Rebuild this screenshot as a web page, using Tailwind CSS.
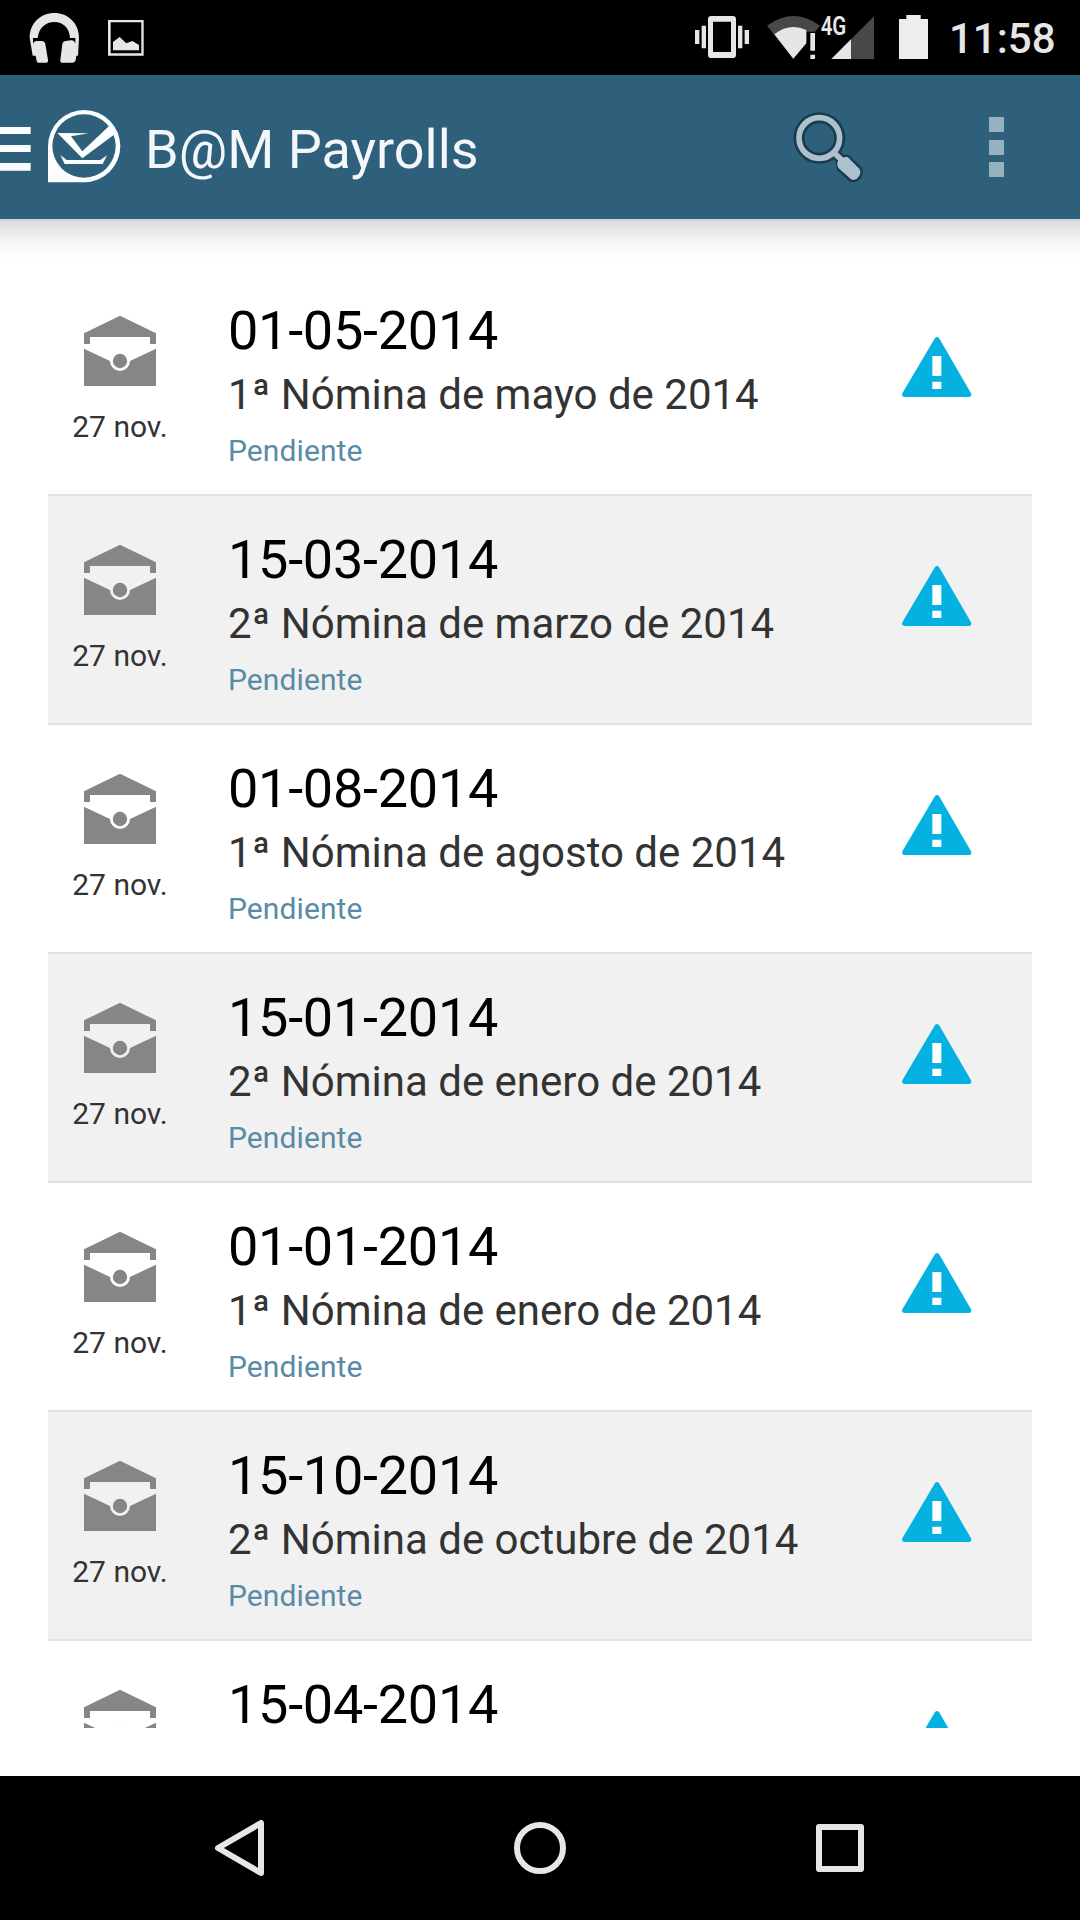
<!DOCTYPE html>
<html lang="es">
<head>
<meta charset="utf-8">
<title>B@M Payrolls</title>
<script src="https://cdn.jsdelivr.net/npm/@tailwindcss/browser@4"></script>
</head>
<body class="bg-white">
<div class="flex h-[1920px] w-[1080px] flex-col overflow-hidden bg-white font-[Roboto,sans-serif]">

  <!-- Status bar -->
  <div class="flex h-[75px] shrink-0 items-start bg-black text-[#e6e6e6]">
    <svg class="h-[75px] w-[200px]" viewBox="0 0 600 225" fill="#e6e6e6">
      <path d="M89 113C89 70 122 39 163 39s74 31 74 74l-3 54h-5l-2 14q-2 7-9 7h-31q-7 0-6-8l6-48q1-8 9-9l17-2q8-1 12 7l1 3V114H210C209 84 189 66 163 66s-47 18-50 48H99v17q3-9 11-8l17 0q8 1 9 9l8 48q1 8-6 8H115q-4 0-5-5l-3-16h-9z"/>
      <path fill-rule="evenodd" d="M324 60h107v107H324zM332 67v93h92V67z"/>
      <path d="M339 151V126l20-15 20 19 18-7 20 12v16z"/>
    </svg>
    <svg class="ml-[480px] h-[75px] w-[260px]" viewBox="0 0 780 225" fill="#e6e6e6">
      <path d="M45 90h13v42H45zM65 77h13v68H65zM174 77h13v68h-13zM194 90h13v42h-13z"/>
      <path fill-rule="evenodd" d="M94 48h64q10 0 10 10v106q0 10-10 10H94q-10 0-10-10V58q0-10 10-10zM99 65v91h54V65z"/>
      <path fill="#484848" d="M261 77Q340 19 420 77L405 95H379V118L340 176z"/>
      <path d="M283 103Q328 67 379 90V130L340 176zM391 99h14v53h-14zM391 164h14v13h-14z"/>
      <path fill="#484848" d="M582 49V177H454z"/>
      <path d="M513 118V177H454z"/>
      <path fill="#ededed" d="M657 57h22V45h43v12h22v120h-87z"/>
      <text x="422" y="106" font-family="Roboto" font-size="75" font-weight="600" textLength="77" lengthAdjust="spacingAndGlyphs">4G</text>
    </svg>
    <span class="ml-[9px] mt-[14px] text-[42px] leading-[50px] font-medium">11:58</span>
  </div>

  <!-- Action bar -->
  <header class="flex h-[144px] shrink-0 items-start bg-[#2e607b]">
    <svg class="mt-[52px] h-11 w-[31px]" viewBox="0 0 93 132" fill="#fbfdfe">
      <path d="M0 0h92v21H0zM0 54h92v21H0zM0 108h92v23H0z"/>
    </svg>
    <svg class="ml-[17px] mt-[35px] h-[73px] w-[73px]" viewBox="144 105 219 219" fill="#fbfdfe">
      <path fill-rule="evenodd" d="M144 213A108.500 108.500 0 1 1 252.500 322H144zM157 213A95 95 0 1 0 347 213A95 95 0 1 0 157 213z"/>
      <path d="M172 174L267 175 213 184 247 229 328 152 344 178 247 250zM181 240l19 15h101l20-14-13 26H194z"/>
    </svg>
    <h1 class="ml-[24px] mt-[43px] text-[54px] leading-[64px] font-normal text-[#f3f6fa]">B@M Payrolls</h1>
    <svg class="ml-auto mt-[35px] h-[75px] w-[72px]" viewBox="98 60 216 225">
      <g stroke="#1a3a4d" fill="none" stroke-linejoin="round">
        <circle cx="177" cy="144" r="61" stroke-width="33"/>
        <path d="M221 188l26 25" stroke-width="31"/>
        <path d="M236 207Q249 201 262 203L297 236Q304 248 295 260 286 271 272 268L236 234Q233 220 236 207z" stroke-width="16"/>
      </g>
      <g stroke="#acc0cd" fill="none">
        <circle cx="177" cy="144" r="61" stroke-width="17"/>
        <path d="M221 188l26 25" stroke-width="17"/>
        <path fill="#acc0cd" stroke="none" d="M231 217Q237 201 262 201L297 236Q304 248 295 260 286 274 272 268L234 234Q229 227 231 217z"/>
      </g>
    </svg>
    <div class="ml-[124px] mr-[76px] mt-[42px] flex flex-col gap-[7.500px]">
      <i class="block size-[15px] bg-[#98b1bf]"></i><i class="block size-[15px] bg-[#98b1bf]"></i><i class="block size-[15px] bg-[#98b1bf]"></i>
    </div>
  </header>
  <div class="h-[2px] shrink-0 bg-[#cbd5df]"></div>
  <div class="h-[38px] shrink-0 bg-linear-to-b from-[#dcdcdc] via-[#f4f4f4] to-white"></div>

  <!-- Payroll list -->
  <ul id="list" class="mx-12 mt-2 h-[1461px] shrink-0 overflow-hidden"></ul>

  <!-- Navigation bar -->
  <nav class="mt-auto flex h-36 shrink-0 items-center justify-center gap-[185px] bg-black">
    <svg class="size-[60px]" viewBox="0 0 60 60" fill="none" stroke="#e6e6e6" stroke-width="6" stroke-linejoin="round"><path d="M51 5V55L8 30z"/></svg>
    <svg class="mx-[55px] size-[60px]" viewBox="0 0 60 60" fill="none" stroke="#e6e6e6" stroke-width="6"><circle cx="30" cy="30" r="23"/></svg>
    <svg class="size-[60px]" viewBox="0 0 60 60" fill="none" stroke="#e6e6e6" stroke-width="6" stroke-linejoin="round"><rect x="9" y="9" width="42" height="42"/></svg>
  </nav>
</div>

<script>
  const rows = [
    ["01-05-2014", "1ª Nómina de mayo de 2014"],
    ["15-03-2014", "2ª Nómina de marzo de 2014"],
    ["01-08-2014", "1ª Nómina de agosto de 2014"],
    ["15-01-2014", "2ª Nómina de enero de 2014"],
    ["01-01-2014", "1ª Nómina de enero de 2014"],
    ["15-10-2014", "2ª Nómina de octubre de 2014"],
    ["15-04-2014", ""]
  ];
  document.getElementById("list").innerHTML = rows.map(([date, name]) => `
    <li class="flex h-[229px] items-start border-b-2 border-[#e2e2e2] even:bg-[#f1f1f1]">
      <div class="flex w-36 flex-col items-center pt-[48px]">
        <svg class="h-[72px] w-[72px]" viewBox="132 75 216 216" fill="#868686">
          <path d="M132 130L240 77l108 53v32H330V141H150v21H132zM132 176l78 37a30 30 0 0 0 60 0l78-37V288H132z"/>
          <circle cx="240" cy="213" r="21.500"/>
        </svg>
        ${name && `<span class="mt-[22px] text-[30px] leading-9 text-[#333]">27 nov.</span>`}
      </div>
      <div class="ml-9 flex grow flex-col pt-8 whitespace-nowrap">
        <span class="text-[54px] leading-[64px] tracking-[-0.25px] text-black">${date}</span>
        ${name && `<span class="mt-[7px] text-[42px] leading-[50px] text-[#333]">${name}</span>
        <span class="mt-[13px] text-[30px] leading-9 tracking-[0.1px] text-[#5a8aa6]">Pendiente</span>`}
      </div>
      <svg class="mr-[60.5px] mt-[69px] h-[62px] w-[70px]" viewBox="65 78 210 186" fill="#05b1e0">
        <path d="M164 84q6-6 12 0L272 250q4 11-7 11H74q-11 0-8-11z"/>
        <path fill="#fff" d="M156 138h27v60h-27zM156 215h27v22h-27z"/>
      </svg>
    </li>`).join("");
</script>
</body>
</html>
